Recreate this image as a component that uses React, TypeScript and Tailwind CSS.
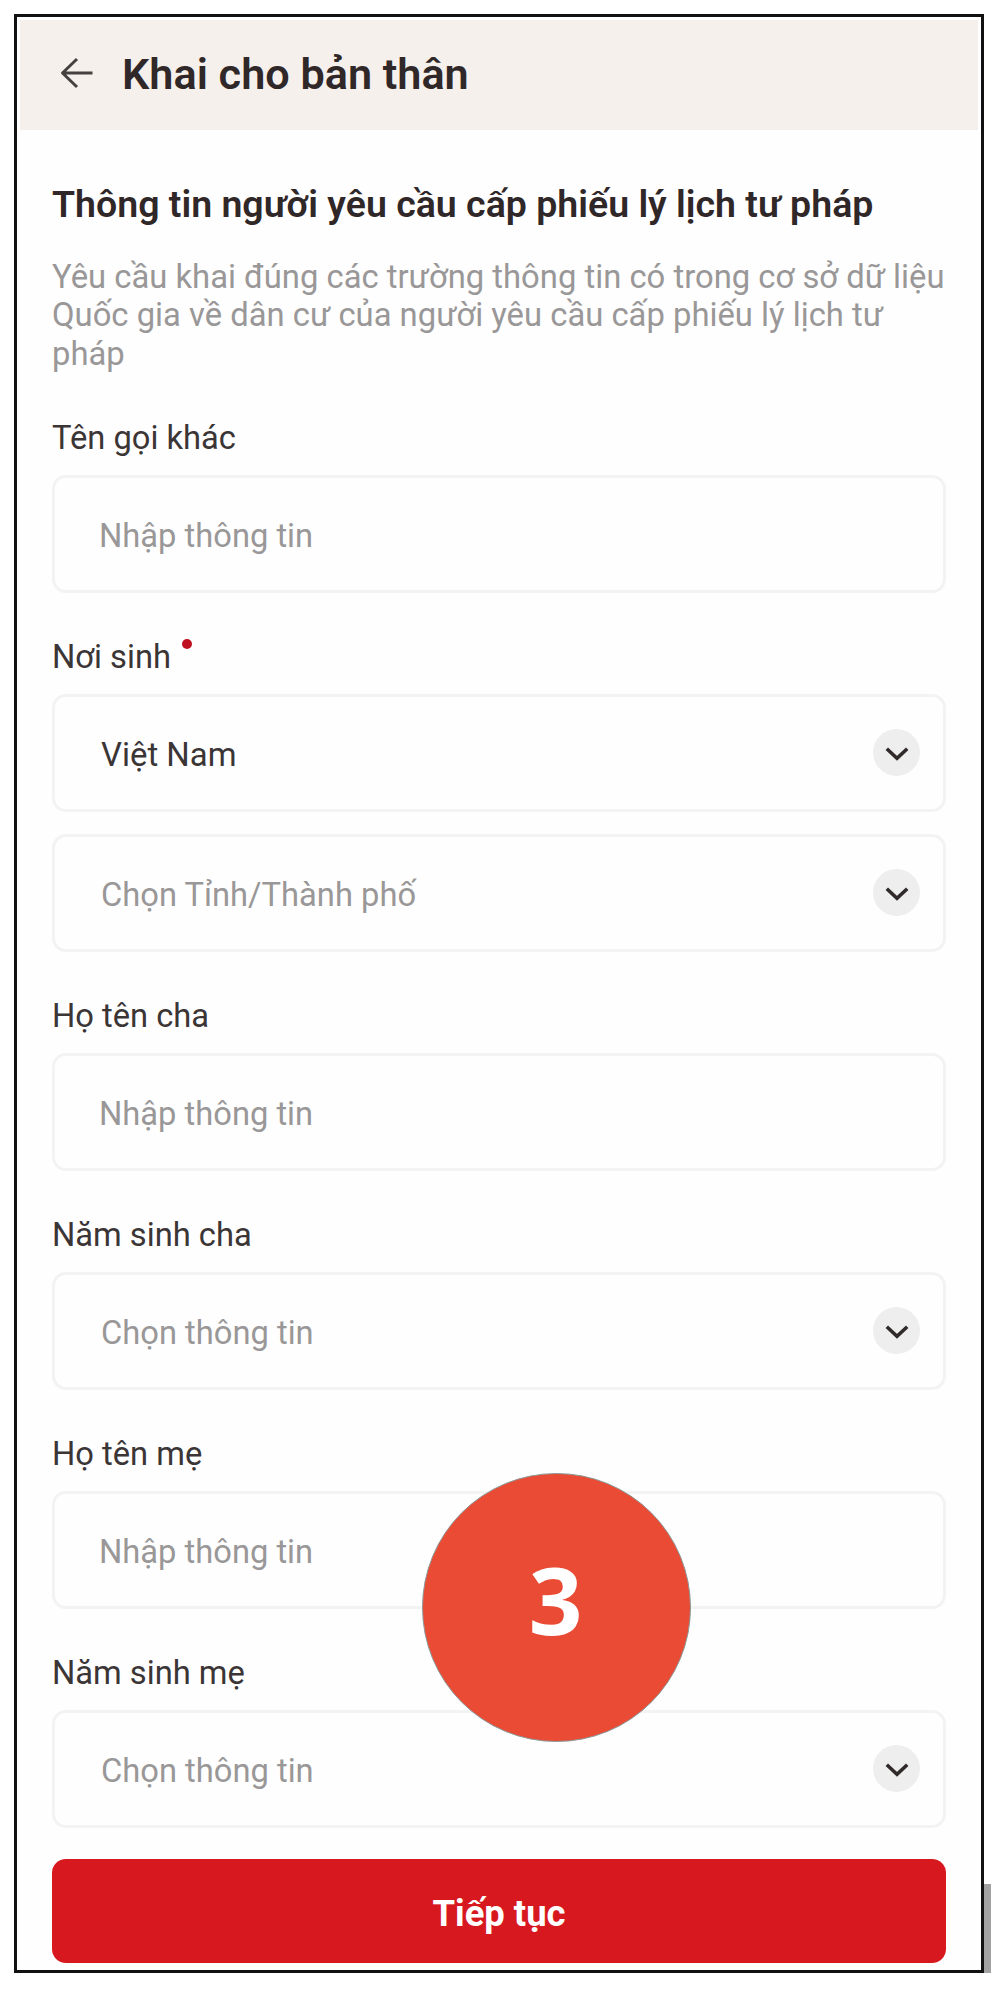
import type { ReactNode } from 'react';

function BackArrow() {
  return (
    <svg className="h-[32px] w-[34px]" viewBox="0 0 34 32" fill="none" stroke="#454141" strokeWidth="3" strokeLinejoin="round">
      <path d="M32.5 16H2.5M17 2L2.5 16L17 30" />
    </svg>
  );
}

function ChevronBadge() {
  return (
    <span className="mb-[2px] flex size-[47px] items-center justify-center rounded-full bg-[#eeeeee]">
      <svg className="mt-[3px] h-[14px] w-[24px]" viewBox="0 0 24 14" fill="none" stroke="#302a2b" strokeWidth="3.6">
        <path d="M1.8 1.8L12 11.2L22.2 1.8" />
      </svg>
    </span>
  );
}

function Box({ children, select = false }: { children: ReactNode; select?: boolean }) {
  return (
    <div
      className={
        select
          ? 'flex h-[118px] items-center justify-between rounded-[14px] border-3 border-[#f3f3f3] pr-[23px] pl-[46px]'
          : 'flex h-[118px] items-center rounded-[14px] border-3 border-[#f3f3f3] pl-[44px]'
      }
    >
      {children}
      {select && <ChevronBadge />}
    </div>
  );
}

function Hint({ children }: { children: ReactNode }) {
  return <span className="pt-[4px] text-[32.7px] leading-[40px] text-[#999797]">{children}</span>;
}

function Field({ label, required = false, children }: { label: string; required?: boolean; children: ReactNode }) {
  return (
    <section className="flex flex-col gap-[17px]">
      <div className="flex h-[41px] gap-[11px] text-[32.7px] leading-[40px] text-[#3b3536]">
        <span className="pt-[1px]">{label}</span>
        {required && <span className="mt-[3px] size-[10px] rounded-full bg-[#bf1020]" />}
      </div>
      <div className="flex flex-col gap-[22px]">{children}</div>
    </section>
  );
}

export default function App() {
  return (
    <div className="relative flex h-[1990px] w-[1000px] items-start bg-white pt-[14px] pl-[14px] font-['Roboto',sans-serif]">
      <main className="relative h-[1959px] w-[970px] shrink-0 border-3 border-[#111111] bg-[#fefefe] p-[3px]">
        <header className="flex h-[110px] items-center bg-[#f5f0ec] pl-[40px]">
          <div className="mb-[5px]">
            <BackArrow />
          </div>
          <h1 className="ml-[28px] text-[43.2px] leading-[50px] font-semibold text-[#302728]">Khai cho bản thân</h1>
        </header>

        <div className="flex flex-col pr-[32px] pl-[32px]">
          <h2 className="mt-[49px] text-[37.5px] leading-[50px] font-semibold whitespace-nowrap text-[#302728]">
            Thông tin người yêu cầu cấp phiếu lý lịch tư pháp
          </h2>
          <p className="mt-[29px] text-[32.8px] leading-[38.4px] whitespace-nowrap text-[#999797]">
            Yêu cầu khai đúng các trường thông tin có trong cơ sở dữ liệu
            <br />
            Quốc gia về dân cư của người yêu cầu cấp phiếu lý lịch tư
            <br />
            pháp
          </p>

          <form className="mt-[43.8px] flex flex-col gap-[43px]">
            <Field label="Tên gọi khác">
              <Box>
                <Hint>Nhập thông tin</Hint>
              </Box>
            </Field>
            <Field label="Nơi sinh" required>
              <Box select>
                <span className="pt-[4px] text-[32.9px] leading-[40px] text-[#3b3536]">Việt Nam</span>
              </Box>
              <Box select>
                <Hint>Chọn Tỉnh/Thành phố</Hint>
              </Box>
            </Field>
            <Field label="Họ tên cha">
              <Box>
                <Hint>Nhập thông tin</Hint>
              </Box>
            </Field>
            <Field label="Năm sinh cha">
              <Box select>
                <Hint>Chọn thông tin</Hint>
              </Box>
            </Field>
            <Field label="Họ tên mẹ">
              <Box>
                <Hint>Nhập thông tin</Hint>
              </Box>
            </Field>
            <Field label="Năm sinh mẹ">
              <Box select>
                <Hint>Chọn thông tin</Hint>
              </Box>
            </Field>
          </form>

          <button className="mt-[31px] h-[104px] rounded-[14px] bg-[#d7191f] pt-[5px] text-[36.4px] leading-[44px] font-bold text-white">
            Tiếp tục
          </button>
        </div>

        <div className="absolute top-[1456px] left-[405px] flex size-[269px] items-center justify-center rounded-full border-[1.5px] border-[#8b9999] bg-[#e94b35]">
          <span className="pr-[2px] pb-[18px] font-['Open_Sans',sans-serif] text-[94px] leading-none font-bold text-white">3</span>
        </div>
      </main>
      <div className="mt-[1870px] h-[89px] w-[7px] bg-[#a2a2a2]" />
    </div>
  );
}
